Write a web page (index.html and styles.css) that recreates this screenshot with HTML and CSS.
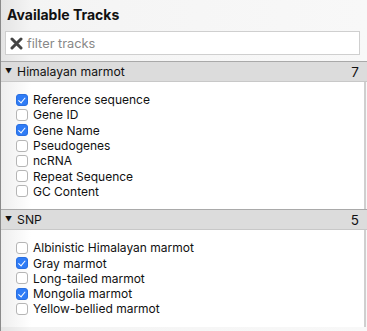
FILE: index.html
```html
<!DOCTYPE html>
<html>
<head>
<meta charset="utf-8">
<link rel="stylesheet" href="styles.css">
</head>
<body>
<div class="panel">
  <h1 class="title">Available Tracks</h1>
  <div class="filter">
    <svg class="clear" width="13" height="13" viewBox="0 0 13 13"><path d="M2 2 L11 11 M11 2 L2 11" stroke="#444" stroke-width="3" stroke-linecap="round"/></svg>
    <span class="placeholder">filter tracks</span>
  </div>
  <div class="section">
    <div class="head"><span class="tri">▼</span><span class="name">Himalayan marmot</span><span class="count">7</span></div>
    <div class="list">
      <label class="item"><span class="cb on"></span>Reference sequence</label>
      <label class="item"><span class="cb"></span>Gene ID</label>
      <label class="item"><span class="cb on"></span>Gene Name</label>
      <label class="item"><span class="cb"></span>Pseudogenes</label>
      <label class="item"><span class="cb"></span>ncRNA</label>
      <label class="item"><span class="cb"></span>Repeat Sequence</label>
      <label class="item"><span class="cb"></span>GC Content</label>
    </div>
  </div>
  <div class="section">
    <div class="head"><span class="tri">▼</span><span class="name">SNP</span><span class="count">5</span></div>
    <div class="list">
      <label class="item"><span class="cb"></span>Albinistic Himalayan marmot</label>
      <label class="item"><span class="cb on"></span>Gray marmot</label>
      <label class="item"><span class="cb"></span>Long-tailed marmot</label>
      <label class="item"><span class="cb on"></span>Mongolia marmot</label>
      <label class="item"><span class="cb"></span>Yellow-bellied marmot</label>
    </div>
  </div>
</div>
</body>
</html>
```
FILE: styles.css
```css
html, body { margin: 0; padding: 0; }
body {
  width: 367px; height: 331px; overflow: hidden;
  font-family: Inter, "Liberation Sans", sans-serif;
  color: #111;
}
.panel {
  height: 331px;
  box-sizing: border-box;
  border-left: 1px solid #8a8a8a;
  background: linear-gradient(to right, #e4e4e4, #f4f4f4 30px, #f8f8f8);
}
.title {
  margin: 0;
  padding: 5px 6px 0;
  font-size: 14px;
  line-height: 20px;
  font-weight: bold;
  height: 21px;
}
.filter {
  margin: 5px 7px 0 4px;
  height: 22px;
  background: #fff;
  border: 1px solid #cfcfcf;
  display: flex;
  align-items: center;
  gap: 4px;
  padding-left: 4px;
}
.placeholder { color: #888; font-size: 12.8px; }
.section { margin-top: 6px; }
.section + .section { margin-top: 0; }
.head {
  display: flex;
  align-items: center;
  height: 19px;
  background: #dcdcdc;
  border-top: 1px solid #a9a9a9;
  border-bottom: 1px solid #c8c8c8;
  padding: 0 8px 0 4px;
  font-size: 12.2px;
}
.tri { font-size: 7px; margin-right: 5px; }
.name { flex: 1; }
.count { font-size: 13.5px; }
.list {
  background: linear-gradient(to right, #eeeeee, #ffffff 30px);
  border-right: 2px solid #cfcfcf;
  margin-right: 1px;
  padding: 10px 0 10px 15px;
  display: flex;
  flex-direction: column;
}
.item {
  display: flex;
  align-items: center;
  height: 15.3px;
  font-size: 12px;
}
.cb {
  width: 10px; height: 10px;
  border: 1px solid #b5b5b5;
  border-radius: 3px;
  background: #fff;
  margin-right: 5px;
  position: relative;
  flex: none;
}
.cb.on {
  background: #2f7cf6;
  border-color: #2a6fe0;
}
.cb.on::after {
  content: "";
  position: absolute;
  left: 3px; top: 1px;
  width: 3px; height: 5.5px;
  border: solid #fff;
  border-width: 0 1.5px 1.5px 0;
  transform: rotate(40deg);
}
```
